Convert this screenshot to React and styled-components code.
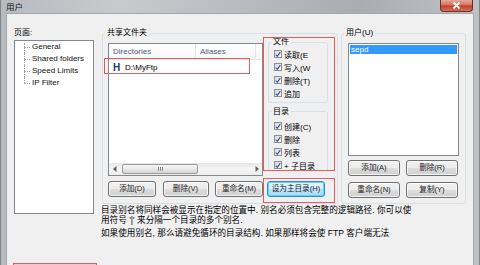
import React from "react";
import styled, { createGlobalStyle, css } from "styled-components";

const GlobalStyle = createGlobalStyle`
  html, body { margin: 0; padding: 0; }
  body {
    width: 480px;
    height: 265px;
    overflow: hidden;
    background: #b9bec4;
    font-family: "Liberation Sans", "Noto Sans CJK SC", sans-serif;
    font-size: 8px;
    color: #000;
  }
`;

const Window = styled.div`
  width: 480px;
  height: 265px;
  overflow: hidden;
  display: flex;
  flex-direction: column;
  background: linear-gradient(90deg, #b7bbbf 0%, #c7cacd 25%, #b2b6ba 60%, #a9adb1 75%, #bfc2c5 100%);
  box-shadow: inset 1px 0 0 #7f858b, inset -1px 0 0 #7f858b;
`;

const TitleBar = styled.div`
  height: 13px;
  flex: none;
  display: flex;
  align-items: flex-start;
  justify-content: space-between;
  padding: 0 7px 0 6px;
`;

const Title = styled.span`
  font-size: 8.5px;
  line-height: 14px;
  color: #111;
`;

const CloseButton = styled.div`
  width: 33px;
  height: 12px;
  box-sizing: border-box;
  border: 1px solid #6e2c24;
  border-top: none;
  border-radius: 0 0 4px 4px;
  background: linear-gradient(#e6a899 0%, #d77a68 40%, #c2412d 55%, #d4735d 100%);
  display: flex;
  align-items: center;
  justify-content: center;
`;

const Client = styled.div`
  flex: 1;
  margin: 0 6px;
  background: #f0f0f0;
  border: 1px solid #a3a8ad;
  border-bottom: none;
  display: flex;
  gap: 7px;
  padding: 15px 7px 0 7px;
`;

const LeftPane = styled.div`
  width: 80px;
  flex: none;
  display: flex;
  flex-direction: column;
`;

const PaneLabel = styled.div`
  line-height: 8px;
  height: 8px;
`;

const TreeBox = styled.div`
  margin-top: 3px;
  height: 174px;
  box-sizing: border-box;
  border: 1px solid #828790;
  background: #fff;
  padding: 0 0 0 9px;
`;

const TreeItem = styled.div`
  position: relative;
  height: 12px;
  line-height: 12px;
  padding-left: 8px;
  white-space: nowrap;
  color: #111;
  &::before {
    content: "";
    position: absolute;
    left: 0;
    top: ${(p) => (p.$first ? "2px" : "0")};
    height: ${(p) => (p.$last ? "6px" : "auto")};
    bottom: ${(p) => (p.$last ? "auto" : "0")};
    border-left: 1px dotted #a0a0a0;
  }
  &::after {
    content: "";
    position: absolute;
    left: 0;
    top: 6px;
    width: 6px;
    border-top: 1px dotted #a0a0a0;
  }
`;

const OkMark = styled.div`
  margin-top: 49px;
  margin-left: -1px;
  width: 84px;
  height: 20px;
  flex: none;
  box-sizing: border-box;
  border: 1.5px solid #e45c5c;
  background: #f6c6c6;
`;

const Main = styled.div`
  flex: 1;
  min-width: 0;
  display: flex;
  flex-direction: column;
`;

const GroupsRow = styled.div`
  display: flex;
  gap: 3px;
  margin-left: 1px;
`;

const Group = styled.fieldset`
  margin: 0;
  padding: 0;
  min-width: 0;
  box-sizing: border-box;
  width: ${(p) => p.$w}px;
  flex: none;
  border: 1px solid #d5dfe5;
  border-radius: 3px;
`;

const Legend = styled.legend`
  padding: 0 2px;
  margin-left: ${(p) => p.$ml ?? 2}px;
  font-size: 8px;
  line-height: 8px;
  white-space: nowrap;
`;

const SharedBody = styled.div`
  display: flex;
  align-items: flex-start;
  padding: 0 2px 0 5px;
`;

const FolderCol = styled.div`
  width: 155px;
  flex: none;
  padding-top: 6px;
`;

const ListView = styled.div`
  height: 133px;
  box-sizing: border-box;
  border: 1px solid #828790;
  background: #fff;
  display: flex;
  flex-direction: column;
`;

const ListHeader = styled.div`
  display: flex;
  height: 16px;
  flex: none;
  box-sizing: border-box;
  border-bottom: 1px solid #e5e5e5;
  background: linear-gradient(#ffffff, #f6f7f9);
`;

const HeaderCell = styled.div`
  width: ${(p) => p.$w}px;
  box-sizing: border-box;
  padding-left: 4px;
  line-height: 15px;
  color: #4c607a;
  border-right: 1px solid #e5e5e5;
`;

const Rows = styled.div`
  flex: 1;
`;

const FolderRow = styled.div`
  position: relative;
  height: 12px;
  display: flex;
  align-items: center;
  padding-left: 4px;
  margin-top: 1px;
  &::after {
    content: "";
    position: absolute;
    left: -5px;
    right: 12px;
    top: -3px;
    bottom: -1px;
    border: 1px solid #e45c5c;
  }
`;

const HomeIcon = styled.span`
  width: 12px;
  font-weight: bold;
  font-size: 10px;
  color: #1e3d6c;
`;

const HScroll = styled.div`
  height: 12px;
  flex: none;
  display: flex;
  align-items: center;
  background: linear-gradient(#e6e6e6, #f5f5f5 45%, #eeeeee);
`;

const Arrow = styled.div`
  width: 11px;
  height: 12px;
  display: flex;
  align-items: center;
  justify-content: center;
  flex: none;
`;

const Thumb = styled.div`
  width: 76px;
  height: 10px;
  margin-left: 2px;
  box-sizing: border-box;
  border: 1px solid #9a9a9a;
  border-radius: 2px;
  background: linear-gradient(#f6f6f6, #e8e8e8 50%, #d6d6d6);
  display: flex;
  align-items: center;
  justify-content: center;
  gap: 1px;
  span {
    width: 1px;
    height: 4px;
    background: #8a8a8a;
  }
`;

const Track = styled.div`
  flex: 1;
`;

const ButtonRow = styled.div`
  margin-top: 5px;
  display: flex;
  justify-content: space-between;
`;

const Button = styled.div`
  width: ${(p) => p.$w}px;
  height: 16px;
  box-sizing: border-box;
  border: 1px solid #707070;
  border-radius: 3px;
  background: linear-gradient(#f2f2f2 0%, #ebebeb 49%, #dddddd 51%, #cfcfcf 100%);
  box-shadow: inset 0 0 0 1px rgba(255, 255, 255, 0.75);
  display: flex;
  align-items: center;
  justify-content: center;
  font-size: 7.6px;
  line-height: 1;
  white-space: nowrap;
  color: #222;
  ${(p) =>
    p.$focused &&
    css`
      border-color: #2b8fcf;
      background: linear-gradient(#eaf6fd 0%, #d9f0fc 49%, #bee6fd 51%, #a7d9f5 100%);
      box-shadow: inset 0 0 0 1px #5fd3f5;
    `}
`;

const PermCol = styled.div`
  width: 72px;
  flex: none;
`;

const PermBox = styled.div`
  height: 134px;
  box-sizing: border-box;
  border: 1px solid #e45c5c;
  overflow: hidden;
  padding: 0 0 0 4px;
`;

const PermGroup = styled(Group)`
  margin-top: ${(p) => p.$mt}px;
`;

const PermBody = styled.div`
  padding: ${(p) => p.$pt}px 0 2px 5px;
`;

const CheckRow = styled.div`
  display: flex;
  align-items: center;
  height: 13px;
  gap: 2px;
  white-space: nowrap;
`;

const CheckBox = styled.span`
  width: 8px;
  height: 8px;
  flex: none;
  box-sizing: border-box;
  border: 1px solid #8f8f8f;
  background: linear-gradient(135deg, #d8d8d8, #fbfbfb);
  display: flex;
  align-items: center;
  justify-content: center;
`;

const HomeBox = styled.div`
  margin-top: 7px;
  height: 25px;
  box-sizing: border-box;
  border: 1px solid #e45c5c;
  padding: 2px 0 0 3px;
`;

const UsersBody = styled.div`
  padding: 6px 0 4px 6px;
`;

const UserList = styled.div`
  width: 111px;
  height: 113px;
  box-sizing: border-box;
  border: 1px solid #828790;
  background: #fff;
  padding: 1px;
`;

const UserItem = styled.div`
  height: 9px;
  line-height: 9px;
  padding-left: 1px;
  background: ${(p) => (p.$selected ? "#3399ff" : "transparent")};
  color: ${(p) => (p.$selected ? "#fff" : "#000")};
`;

const UserButtons = styled.div`
  display: grid;
  grid-template-columns: 52px 52px;
  column-gap: 6px;
  row-gap: 6px;
  margin-top: 4px;
`;

const Desc = styled.div`
  margin-top: 2px;
  font-size: 8.6px;
  line-height: 9.5px;
`;

const DescPara = styled.p`
  margin: 0 0 4px;
  white-space: nowrap;
`;

const Check = () => (
  <CheckBox>
    <svg width="7" height="7" viewBox="0 0 7 7">
      <path d="M1 3.6 L2.7 5.6 L6.2 0.8" fill="none" stroke="#2c4f9e" strokeWidth="1.3" />
    </svg>
  </CheckBox>
);

const fileRights = ["读取(E", "写入(W", "删除(T)", "追加"];
const dirRights = ["创建(C)", "删除", "列表", "+ 子目录"];
const pages = ["General", "Shared folders", "Speed Limits", "IP Filter"];

export default function App() {
  return (
    <>
      <GlobalStyle />
      <Window>
        <TitleBar>
          <Title>用户</Title>
          <CloseButton>
            <svg width="9" height="7" viewBox="0 0 9 7">
              <path d="M1.5 0.5 L7.5 6.5 M7.5 0.5 L1.5 6.5" stroke="#fff" strokeWidth="1.8" />
            </svg>
          </CloseButton>
        </TitleBar>
        <Client>
          <LeftPane>
            <PaneLabel>页面:</PaneLabel>
            <TreeBox>
              {pages.map((p, i) => (
                <TreeItem key={p} $first={i === 0} $last={i === pages.length - 1}>
                  {p}
                </TreeItem>
              ))}
            </TreeBox>
            <OkMark />
          </LeftPane>
          <Main>
            <GroupsRow>
              <Group $w={236}>
                <Legend>共享文件夹</Legend>
                <SharedBody>
                  <FolderCol>
                    <ListView>
                      <ListHeader>
                        <HeaderCell $w={87}>Directories</HeaderCell>
                        <HeaderCell $w={60}>Aliases</HeaderCell>
                      </ListHeader>
                      <Rows>
                        <FolderRow>
                          <HomeIcon>H</HomeIcon>
                          D:\MyFtp
                        </FolderRow>
                      </Rows>
                      <HScroll>
                        <Arrow>
                          <svg width="4" height="6" viewBox="0 0 4 6">
                            <path d="M3.5 0 L0 3 L3.5 6 Z" fill="#606060" />
                          </svg>
                        </Arrow>
                        <Thumb>
                          <span />
                          <span />
                          <span />
                        </Thumb>
                        <Track />
                        <Arrow>
                          <svg width="4" height="6" viewBox="0 0 4 6">
                            <path d="M0.5 0 L4 3 L0.5 6 Z" fill="#606060" />
                          </svg>
                        </Arrow>
                      </HScroll>
                    </ListView>
                    <ButtonRow>
                      <Button $w={48}>添加(D)</Button>
                      <Button $w={46}>删除(V)</Button>
                      <Button $w={48}>重命名(M)</Button>
                    </ButtonRow>
                  </FolderCol>
                  <PermCol>
                    <PermBox>
                      <PermGroup $w={60} $mt={0}>
                        <Legend>文件</Legend>
                        <PermBody $pt={1.5}>
                          {fileRights.map((r) => (
                            <CheckRow key={r}>
                              <Check />
                              {r}
                            </CheckRow>
                          ))}
                        </PermBody>
                      </PermGroup>
                      <PermGroup $w={60} $mt={5}>
                        <Legend>目录</Legend>
                        <PermBody $pt={4}>
                          {dirRights.map((r) => (
                            <CheckRow key={r}>
                              <Check />
                              {r}
                            </CheckRow>
                          ))}
                        </PermBody>
                      </PermGroup>
                    </PermBox>
                    <HomeBox>
                      <Button $w={58} $focused>
                        设为主目录(H)
                      </Button>
                    </HomeBox>
                  </PermCol>
                </SharedBody>
              </Group>
              <Group $w={125}>
                <Legend>用户(U)</Legend>
                <UsersBody>
                  <UserList>
                    <UserItem $selected>sepd</UserItem>
                  </UserList>
                  <UserButtons>
                    <Button $w={52}>添加(A)</Button>
                    <Button $w={52}>删除(R)</Button>
                    <Button $w={52}>重命名(N)</Button>
                    <Button $w={52}>复制(Y)</Button>
                  </UserButtons>
                </UsersBody>
              </Group>
            </GroupsRow>
            <Desc>
              <DescPara>
                目录别名将同样会被显示在指定的位置中. 别名必须包含完整的逻辑路径. 你可以使
                <br />
                用符号 '|' 来分隔一个目录的多个别名.
              </DescPara>
              <DescPara>如果使用别名, 那么请避免循环的目录结构. 如果那样将会使 FTP 客户端无法</DescPara>
            </Desc>
          </Main>
        </Client>
      </Window>
    </>
  );
}
